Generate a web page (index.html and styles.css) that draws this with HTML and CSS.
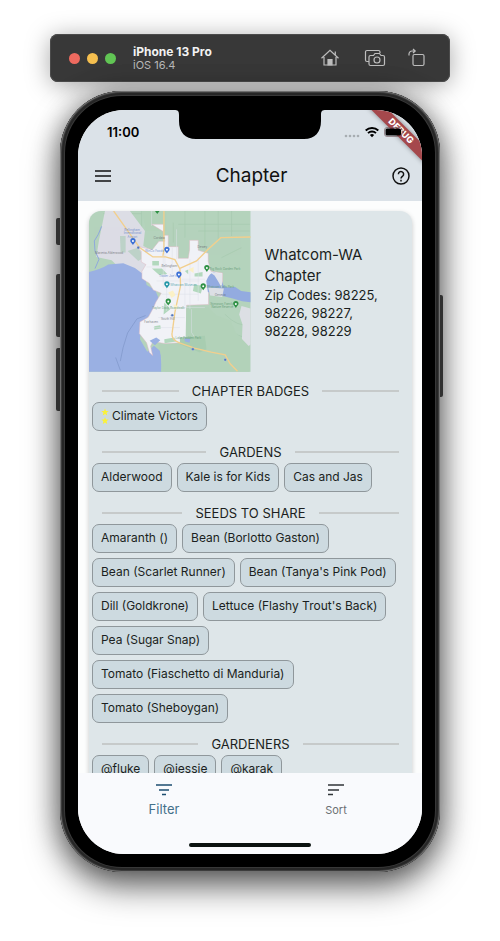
FILE: index.html
```html
<!DOCTYPE html>
<html lang="en">
<head>
<meta charset="utf-8">
<meta name="viewport" content="width=device-width, initial-scale=1">
<title>Chapter</title>
<link rel="stylesheet" href="styles.css">
</head>
<body>
<div class="simulator">
  <header class="toolbar">
    <div class="lights"><span class="light red"></span><span class="light amber"></span><span class="light green"></span></div>
    <div class="device-name"><strong>iPhone 13 Pro</strong><span>iOS 16.4</span></div>
    <div class="tools">
      <button class="tool" aria-label="Home">
        <svg width="24" height="20" viewBox="-2 0 24 20"><path d="M1.500 10.200 10 2.200l8.500 8M15.300 7V3.500M4 9v8h12V9"/><path class="solid" d="M8 17v-5.500h4V17z"/></svg>
      </button>
      <button class="tool" aria-label="Screenshot">
        <svg width="22" height="20" viewBox="0 0 22 20"><path d="M5 13.500H3A1.500 1.500 0 0 1 1.500 12V4A1.500 1.500 0 0 1 3 2.500h11.500A1.500 1.500 0 0 1 16 4v1"/><path d="M6.500 7.500h3L11 5.500h4.500L17 7.500h2A1.500 1.500 0 0 1 20.500 9v7a1.500 1.500 0 0 1-1.500 1.500H6.500A1.500 1.500 0 0 1 5 16V9a1.500 1.500 0 0 1 1.500-1.500z"/><circle cx="13" cy="12" r="3"/></svg>
      </button>
      <button class="tool" aria-label="Rotate">
        <svg width="17" height="20" viewBox="1.500 0 17 20"><rect x="6.500" y="6.500" width="11" height="11" rx="1.500"/><path d="M2.500 7.500V6a3 3 0 0 1 3-3h3M6.500 1l2.200 2-2.200 2"/></svg>
      </button>
    </div>
  </header>

  <div class="phone">
    <i class="key mute"></i><i class="key up"></i><i class="key down"></i><i class="key power"></i>
    <div class="screen">
      <svg class="notch" width="152" height="29" viewBox="0 0 152 29"><path d="M0 0h152c-4 0-5 1-5 5v6c0 11-6 18-17 18H22C11 29 5 22 5 11V5c0-4-1-5-5-5z"/></svg>
      <div class="debug">DEBUG</div>
      <div class="top">
        <div class="status">
          <time>11:00</time>
          <div class="signals">
            <svg width="16" height="14" viewBox="0 0 16 14" fill="#a7adb1"><circle cx="2" cy="11" r="1.300"/><circle cx="6" cy="11" r="1.300"/><circle cx="10" cy="11" r="1.300"/><circle cx="14" cy="11" r="1.300"/></svg>
            <svg width="14" height="12" viewBox="0 0 14 12" fill="none" stroke="#000" stroke-width="1.900"><path d="M.7 4.500a9 9 0 0 1 12.600 0M3 7.100a5.700 5.700 0 0 1 8 0"/><path d="M7 11.200 4.900 9.100a3 3 0 0 1 4.200 0z" fill="#000" stroke="none"/></svg>
            <svg width="20" height="10" viewBox="0 0 20 10"><rect x=".5" y=".5" width="17.500" height="9" rx="2.500" fill="none" stroke="#6b5055" stroke-opacity=".6"/><rect x="1.500" y="1.500" width="15.500" height="7" rx="1.500"/><path d="M19 3.500c1.200.5 1.200 2.500 0 3z" fill="#6b5055"/></svg>
          </div>
        </div>
        <div class="appbar">
          <button class="icon-button" aria-label="Menu"><svg width="16" height="12" viewBox="0 0 16 12"><path d="M0 1h16M0 6h16M0 11h16" stroke="#111" stroke-width="1.500"/></svg></button>
          <h1>Chapter</h1>
          <button class="icon-button" aria-label="Help"><svg width="18" height="18" viewBox="0 0 18 18" fill="none" stroke="#111" stroke-width="1.500"><circle cx="9" cy="9" r="8"/><path d="M6.400 7.200a2.600 2.600 0 1 1 4.200 2C9.500 10 9 10.400 9 11.600M9 12.800v1.600"/></svg></button>
        </div>
      </div>

      <main class="content">
        <article class="card">
          <div class="summary">
            <svg class="map" viewBox="12 20 485 483" role="img" aria-label="Map of Bellingham">
              <rect x="12" y="20" width="485" height="483" fill="#b4d3bc"/>
              <g class="contours"><path d="M55 28h115M55 55h60M170 20v60M280 60h215M340 80h155M400 20v90M440 20v75M360 20v110M300 20v80M265 55v60M410 160l60-30M400 240l60 20M420 330q40 40 70 30M330 340q60 60 110 40M380 340q30 40 100 60M240 460q60-30 130 10M260 490q60-40 150-5M410 440q40-30 80-20"/></g>
              <path d="M60 20h75l45 60-5 45 60 30 50 30-40 60-70-15-20-30-45-2-30-30-46-10 8-50z" fill="#dcdde5"/>
              <path d="M105 95h17v50h-15zM128 140l30-10 22 28-20 12z" fill="#bdd2c8"/>
              <path d="M12 203q35-7 58-22l45-4 35 14 30 23 5 28 26 15 10 25-16 38-35 40-5 45 22 38 20-18 20 16 3 62H12z" fill="#9ab0e3"/>
              <path d="M170 20h74v60h-60zM238 420h105l60-60 90 70v73H228z" fill="#b2d2b9"/>
              <path d="M50 66 40 90l-12 20 2 30 12 25-12 28" class="river"/>
              <path d="M200 60h36v33h14v34h30v35h30l4-26V108h26v30l30 9v24l8 30 35 5v45l-42-2v52l-66 2v112l-66 3-35-6-7 14 6 28-10-10-8-28-22-28 2-35 25-14 15-28 8-18 16-26-24-10-12-20-22-14v-22l12-20-14-8v-32l-12-15 45 10 20-25h18l-6-30z" class="city"/>
              <path d="M364 230q12-32 30-24l17 20q0 20 16 24l24-2 18 12 28 4v30l-25-3-28-8-40-10-35-10z" fill="#93abe0"/>
              <path d="M376 205l36 3-1 44-10-19-12-19z" fill="#e4e6ed"/><path d="M370 250l47 3-5 25-36-4z" fill="#dcdfe5"/>
              <path d="M470 305l27 8v108l-12 10-14-20 2-50-10-30z" fill="#dcdfe4"/>
              <path d="M304 309h66l25 25 42 15 15 35 43 45v73H240l-20-80 82-4z" fill="#b2d2b9"/>
              <path d="M202 170h20v14h-20zM328 240l26 5-6 23-24-8zM208 366l18-3 2 10-20 4zM238 295l18 20-20 16zM201 193h30l16 16-24 3zM238 405l30-5 6 12-35 5zM329 208l24-5v14h-24zM300 200l10-4v14z" fill="#b2d8bd"/>
              <path d="M285 400l75-5 5 40-20 10-60-25z" fill="#a8cdb1"/><path d="M298 402l18 2-2 12-14-4zM194 410l20-10 12 8-16 15z" fill="#9ab0e3"/>
              <g class="streets"><path d="M200 20v45M238 95v65M185 188h75M240 140v60M262 130v80M215 230h130M220 340h80M205 370h80M270 310h90M315 165v150M340 160v130M290 225h70M230 270h110M245 240v80M320 315v70l8 12M235 160v90M275 75v90M300 235v70"/></g>
              <g class="roads"><path d="M86 20l44 62 34 48 40 28h38l28 8 15 28 2 50-17 80-8 60q-5 22 20 31l47 17 50 12 42 8 15 27 22 22M285 192l50-22 35-35 38-35 89-2M237 20v115l-3 20"/></g>
              <path d="M182 334l-26 10-28 42q-16 45-22 85M92 460l14 38" fill="none" stroke="#748cbf" stroke-width="1.500"/>
              <g fill="#fbf1c7"><path d="M250 265l14-6 8 14-12 8zM310 196l16-8v18zM265 300l14 5-8 12z"/></g>
              <g class="labels">
                <text x="118" y="80">Bellingham</text><text x="116" y="90">International</text><text x="128" y="100">Airport</text>
                <text x="30" y="150" class="dark">Marietta-Alderwood</text>
                <text x="180" y="142">WinCo Foods</text><text x="222" y="217">Trader Joe's</text>
                <text x="256" y="246" class="teal">Whatcom Museum</text>
                <text x="374" y="198" class="park">Big Rock Garden Park</text><text x="364" y="252" class="park">Whatcom Falls Park</text>
                <text x="376" y="301" class="park">Stimpson Family</text><text x="380" y="311" class="park">Nature Reserve</text>
                <text x="202" y="313" class="park">Taylor Dock Boardwalk</text><text x="272" y="403" class="park">Lake Padden Park</text>
                <text x="230" y="189" class="dark">Bellingham</text><text x="178" y="357" class="dark">Fairhaven</text><text x="228" y="346" class="dark">South Hill</text><text x="390" y="276" class="dark">Geneva</text><text x="338" y="132" class="dark">Dewey</text><text x="206" y="105" class="dark">Cordata</text>
              </g>
              <g class="pins">
                <path class="blue" d="M144 122c-5-7-8-9-8-13a8 8 0 0 1 16 0c0 4-3 6-8 13z"/>
                <path class="blue" d="M246 148c-5-7-8-9-8-13a8 8 0 0 1 16 0c0 4-3 6-8 13zM282 223c-5-7-8-9-8-13a8 8 0 0 1 16 0c0 4-3 6-8 13z"/>
                <path class="aqua" d="M246 252c-5-7-8-9-8-13a8 8 0 0 1 16 0c0 4-3 6-8 13z"/>
                <path class="leaf" d="M366 203c-5-7-8-9-8-13a8 8 0 0 1 16 0c0 4-3 6-8 13zM355 258c-5-7-8-9-8-13a8 8 0 0 1 16 0c0 4-3 6-8 13zM250 304c-5-7-8-9-8-13a8 8 0 0 1 16 0c0 4-3 6-8 13zM453 311c-5-7-8-9-8-13a8 8 0 0 1 16 0c0 4-3 6-8 13zM217 29c-5-7-8-9-8-13h16c0 4-3 6-8 13z"/>
                <g fill="#fff"><circle cx="144" cy="110" r="3"/><circle cx="246" cy="136" r="3"/><circle cx="282" cy="211" r="3"/><circle cx="246" cy="240" r="3"/><circle cx="366" cy="191" r="3"/><circle cx="355" cy="246" r="3"/><circle cx="250" cy="292" r="3"/><circle cx="453" cy="299" r="3"/></g>
                <g class="shields"><circle cx="160" cy="130" r="4"/><circle cx="262" cy="333" r="4"/><circle cx="324" cy="435" r="4"/><circle cx="421" cy="467" r="4"/></g>
              </g>
            </svg>
            <div class="about"><h2>Whatcom-WA Chapter</h2><p>Zip Codes: 98225, 98226, 98227, 98228, 98229</p></div>
          </div>

          <div class="sections">
            <section>
              <h3>CHAPTER BADGES</h3>
              <div class="chips"><button class="chip badge"><svg width="8" height="16" viewBox="0 0 8 16" fill="#fbf236"><path d="M4 .5l1 2.400 2.600.2-2 1.700.6 2.600L4 6l-2.200 1.400.6-2.600-2-1.700L3 2.900z"/><path d="M4 9l1 2.400 2.600.2-2 1.700.6 2.600L4 14.500l-2.200 1.400.6-2.600-2-1.700 2.600-.2z"/></svg>Climate Victors</button></div>
            </section>
            <section>
              <h3>GARDENS</h3>
              <div class="chips"><button class="chip">Alderwood</button><button class="chip">Kale is for Kids</button><button class="chip">Cas and Jas</button></div>
            </section>
            <section>
              <h3>SEEDS TO SHARE</h3>
              <div class="chips"><button class="chip">Amaranth ()</button><button class="chip">Bean (Borlotto Gaston)</button><button class="chip">Bean (Scarlet Runner)</button><button class="chip">Bean (Tanya's Pink Pod)</button><button class="chip">Dill (Goldkrone)</button><button class="chip">Lettuce (Flashy Trout's Back)</button><button class="chip">Pea (Sugar Snap)</button><button class="chip">Tomato (Fiaschetto di Manduria)</button><button class="chip">Tomato (Sheboygan)</button></div>
            </section>
            <section>
              <h3>GARDENERS</h3>
              <div class="chips"><button class="chip">@fluke</button><button class="chip">@jessie</button><button class="chip">@karak</button></div>
            </section>
          </div>
        </article>
      </main>

      <nav class="bottom">
        <button class="tab active"><svg width="16" height="12" viewBox="0 0 16 12"><path d="M0 1h16M3 6h10M6 10.500h4"/></svg><span>Filter</span></button>
        <button class="tab"><svg width="16" height="12" viewBox="0 0 16 12"><path d="M0 1h16M0 6h11M0 10.500h5"/></svg><span>Sort</span></button>
        <i class="home-indicator"></i>
      </nav>
    </div>
  </div>
</div>
</body>
</html>
```
FILE: styles.css
```css
* { box-sizing: border-box; }
body { margin: 0; background: #fff; font-family: Inter, "Liberation Sans", sans-serif; color: #1b1f21; }
button { border: 0; padding: 0; margin: 0; background: none; font: inherit; color: inherit; cursor: pointer; }
h1, h2, h3, p { margin: 0; font-weight: 400; }
svg { display: block; flex: none; }

.simulator { height: 100vh; min-height: 560px; max-width: 540px; margin: 0 auto; padding: 34px 50px 69px; display: flex; flex-direction: column; gap: 9px; }

.toolbar { position: relative; z-index: 1; flex: none; height: 48px; display: flex; align-items: center; padding: 0 25px 0 19px; background: #383838; border-radius: 8px; box-shadow: inset 0 0 0 1px #4b4b4b, 0 3px 24px rgba(0, 0, 0, .35); }
.lights { display: flex; gap: 7px; }
.light { width: 11px; height: 11px; border-radius: 50%; }
.red { background: #ee6a5f; }
.amber { background: #f5bf4f; }
.green { background: #61c554; }
.device-name { margin-left: 17px; display: flex; flex-direction: column; font-size: 11px; line-height: 13px; color: #b9b9b9; }
.device-name strong { font-size: 12px; line-height: 14px; color: #f2f2f2; }
.tools { margin-left: auto; display: flex; align-items: center; gap: 22px; }
.tool svg { fill: none; stroke: #bdbdbd; stroke-width: 1.2; }
.tool .solid { fill: #bdbdbd; }

.phone { position: relative; z-index: 2; flex: 1; min-height: 0; margin: 0 10px; padding: 19px 18px 18px; border-radius: 62px; background: #000; box-shadow: inset 0 0 0 1px #707070, inset 0 0 0 2px #3c3c3c, inset 0 0 0 4px #262626, inset 0 0 0 5px #383838, 0 0 26px rgba(0, 0, 0, .3), 0 14px 34px rgba(0, 0, 0, .6); display: flex; }
.key { position: absolute; left: -4px; width: 4px; background: #303030; border-radius: 2px 0 0 2px; }
.mute { top: 127px; height: 27px; }
.up { top: 183px; height: 63px; }
.down { top: 257px; height: 63px; }
.power { left: auto; right: -3px; width: 3px; top: 204px; height: 102px; border-radius: 0 2px 2px 0; }

.screen { position: relative; flex: 1; min-width: 0; display: flex; flex-direction: column; overflow: hidden; border-radius: 46px; background: #fcfdfd; }
.notch { position: absolute; z-index: 2; top: 0; left: 50%; transform: translateX(-50%); }
.debug { position: absolute; top: 15px; right: -19px; width: 80px; transform: rotate(45deg); background: #a5484c; color: #fff; font-size: 9px; line-height: 12px; font-weight: 800; text-align: center; box-shadow: 0 0 5px rgba(0, 0, 0, .4); }
.top { flex: none; background: #dbe2e8; }
.status { height: 41px; padding: 2px 18px 0 29px; display: flex; align-items: center; justify-content: space-between; font-size: 13px; font-weight: 600; color: #000; }
.signals { position: relative; z-index: 1; display: flex; align-items: center; gap: 5px; }
.appbar { height: 50px; padding: 0 12px 0 17px; display: flex; align-items: center; justify-content: space-between; }
.appbar h1 { font-size: 19px; line-height: 24px; color: #111; }

.content { flex: 1; min-height: 0; overflow: hidden; padding: 10px 10px 0 11px; }
.card { background: #dee6e9; border-radius: 12px; box-shadow: 0 2px 5px rgba(0, 0, 0, .22); min-height: 100%; }
.summary { display: grid; grid-template-columns: 1fr 1fr; align-items: center; }
.map { width: 100%; border-radius: 12px 0 0 0; }
.about { padding: 2px 14px 0; }
.about h2 { font-size: 15px; line-height: 21px; }
.about p { font-size: 13px; line-height: 18px; }

.contours path { fill: none; stroke: #a6c8af; stroke-width: 2; }
.river { fill: none; stroke: #8fa8dc; stroke-width: 3; }
.city { fill: #f1f2f7; stroke: #dcb9c2; stroke-width: 1.5; }
.streets path { fill: none; stroke: #dde0e8; stroke-width: 1.5; }
.roads path { fill: none; stroke: #f2cf8d; stroke-width: 4; }
.labels { font-size: 9px; fill: #5d7fc8; opacity: .8; }
.labels .dark { fill: #686c72; }
.labels .park { fill: #5b9670; }
.labels .teal { fill: #3c9aa6; }
.pins .blue { fill: #3c70d6; }
.pins .aqua { fill: #2597a8; }
.pins .leaf { fill: #2f9145; }
.shields circle { fill: #5075bd; stroke: #d6deee; }

.sections { padding: 9px 3px; display: flex; flex-direction: column; gap: 11px; }
h3 { display: flex; align-items: center; gap: 13px; margin: 0 10px 1px; font-size: 13px; line-height: 20px; white-space: nowrap; }
h3::before, h3::after { content: ""; flex: 1; height: 2px; background: #c6caca; }
.chips { display: flex; flex-wrap: wrap; gap: 5px; }
.chip { height: 29px; padding: 0 8px; border: 1px solid #8f979b; border-radius: 7px; background: #cddae0; font-size: 12px; line-height: 18px; white-space: nowrap; }
.badge { display: flex; align-items: center; gap: 3px; }

.bottom { position: relative; flex: none; height: 81px; display: flex; background: #f9fafd; }
.tab { flex: 1; display: flex; flex-direction: column; align-items: center; padding-top: 11px; gap: 4px; font-size: 11px; line-height: 20px; color: #6c7073; }
.tab path { fill: none; stroke: #303538; stroke-width: 1.6; }
.active { font-size: 13px; line-height: 18px; color: #43708a; }
.active path { stroke: #1d4e70; }
.home-indicator { position: absolute; bottom: 7px; left: 50%; width: 122px; height: 4px; transform: translateX(-50%); border-radius: 2px; background: #0b1210; }
```
